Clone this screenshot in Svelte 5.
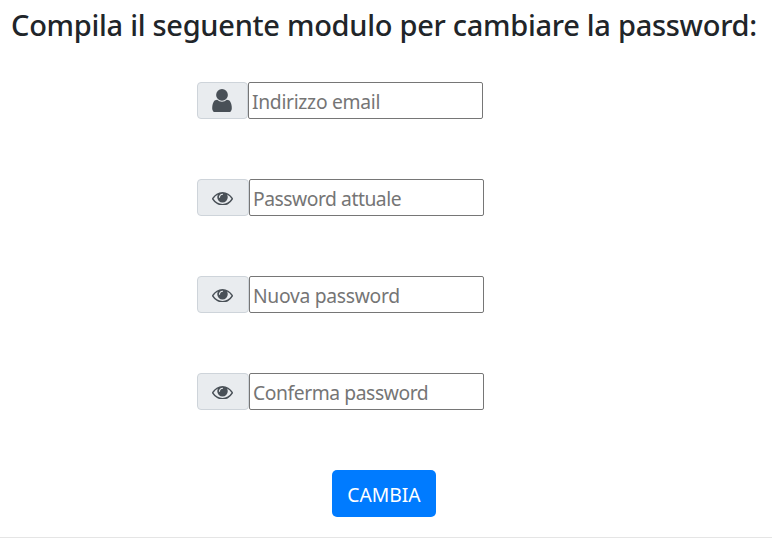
<script>
  const fields = [
    { label: 'Indirizzo email', type: 'email', icon: 'user', spacing: -0.016 },
    { label: 'Password attuale', type: 'password', icon: 'eye', spacing: -0.024 },
    { label: 'Nuova password', type: 'password', icon: 'eye', spacing: -0.015 },
    { label: 'Conferma password', type: 'password', icon: 'eye', spacing: -0.022 }
  ];
</script>

<main>
  <h1>Compila il seguente modulo per cambiare la password:</h1>
  <form>
    {#each fields as field}
      <div class="group">
        <span class="addon" class:wide={field.icon === 'eye'}>
          {#if field.icon === 'user'}
            <svg class="user" viewBox="0 128 1280 1536" aria-hidden="true"><path d="M1280 1399q0 109-62.5 187t-150.5 78h-854q-88 0-150.5-78t-62.5-187q0-85 8.5-160.5t31.5-152 58.5-131 94-89 134.5-34.5q131 128 313 128t313-128q76 0 134.5 34.5t94 89 58.5 131 31.5 152 8.5 160.5zm-256-887q0 159-112.5 271.5t-271.5 112.5-271.5-112.5-112.5-271.5 112.5-271.5 271.5-112.5 271.5 112.5 112.5 271.5z" /></svg>
          {:else}
            <svg class="eye" viewBox="0 384 1792 1152" aria-hidden="true"><path d="M1664 960q-152-236-381-353 61 104 61 225 0 185-131.5 316.5t-316.5 131.5-316.5-131.5-131.5-316.5q0-121 61-225-229 117-381 353 133 205 333.5 326.5t434.5 121.5 434.5-121.5 333.5-326.5zm-720-384q0-20-14-34t-34-14q-125 0-214.5 89.5t-89.5 214.5q0 20 14 34t34 14 34-14 14-34q0-86 61-147t147-61q20 0 34-14t14-34zm848 384q0 34-20 69-140 230-376.5 368.5t-499.5 138.5-499.5-139-376.5-368q-20-35-20-69t20-69q140-229 376.5-368t499.5-139 499.5 139 376.5 368q20 35 20 69z" /></svg>
          {/if}
        </span>
        <input type={field.type} placeholder={field.label} aria-label={field.label} style:letter-spacing="{field.spacing}em" />
      </div>
    {/each}
    <button type="button">CAMBIA</button>
  </form>
  <hr />
</main>

<style>
  :global(body) {
    margin: 0;
    background: #fff;
  }
  main {
    height: 557px;
    overflow: hidden;
    font-family: 'Segoe UI', 'Noto Sans', sans-serif;
    color: #212529;
  }
  h1 {
    margin: 0;
    padding: 7px 0 0 11px;
    height: 75px;
    box-sizing: border-box;
    font-size: 29px;
    line-height: 36px;
    font-weight: 500;
    letter-spacing: -0.28px;
    white-space: nowrap;
  }
  form {
    display: flex;
    flex-direction: column;
    padding-top: 7px;
  }
  .group {
    display: flex;
    height: 37px;
    margin: 0 0 60px 197px;
  }
  .addon {
    box-sizing: border-box;
    width: 51px;
    display: flex;
    align-items: center;
    padding-left: 14px;
    background: #e9ecef;
    border: 1px solid #ced4da;
    border-radius: 4px;
  }
  .addon.wide {
    width: 52px;
    padding-top: 2px;
  }
  svg {
    display: block;
    fill: #495057;
  }
  .user {
    width: 20px;
    height: 23.5px;
  }
  .eye {
    width: 21px;
    height: 13.5px;
  }
  input {
    box-sizing: border-box;
    width: 235px;
    height: 37px;
    margin: 0;
    padding: 3px 3px 1px;
    border: 1px solid #767676;
    border-radius: 2px;
    background: #fff;
    font: 19.3px/30px 'Segoe UI', 'Noto Sans', sans-serif;
    outline: 0;
  }
  input::placeholder {
    color: #757575;
    opacity: 1;
  }
  button {
    width: 104px;
    height: 47px;
    margin-left: 332px;
    padding: 2px 0 0;
    border: 0;
    border-radius: 5px;
    background: #007bff;
    color: #fff;
    font: 19.3px/30px 'Segoe UI', 'Noto Sans', sans-serif;
    letter-spacing: 0;
  }
  hr {
    margin: 20px 0 0;
    border: 0;
    border-top: 1px solid #e5e5e5;
  }
</style>
